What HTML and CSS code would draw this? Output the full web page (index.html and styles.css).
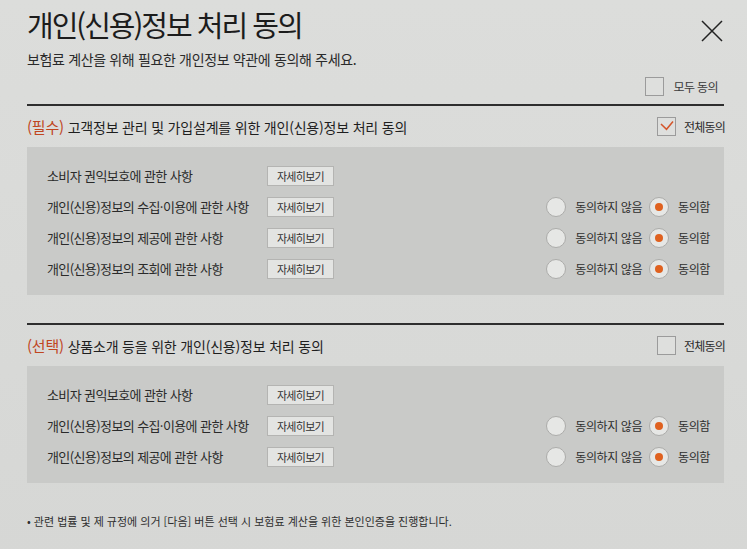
FILE: index.html
```html
<!doctype html>
<html lang="ko">
<head>
	<meta charset="UTF-8" />
	<title>개인(신용)정보 처리 동의</title>
	<link rel="stylesheet" href="styles.css">
</head>
<body>
<div class="popup">
	<div class="popup_head">
		<h1 class="popup_title">개인(신용)정보 처리 동의</h1>
		<button class="btn_close" type="button" aria-label="닫기">
			<svg width="22" height="22" viewBox="0 0 22 22"><path d="M1 1L21 21M21 1L1 21" stroke="#222" stroke-width="1.5" fill="none"/></svg>
		</button>
	</div>
	<p class="popup_lead">보험료 계산을 위해 필요한 개인정보 약관에 동의해 주세요.</p>
	<div class="agree_total">
		<span class="chk"></span><span class="agree_txt">모두 동의</span>
	</div>

	<div class="terms">
		<div class="terms_head">
			<h2 class="terms_title"><em>(필수)</em> 고객정보 관리 및 가입설계를 위한 개인(신용)정보 처리 동의</h2>
			<div class="agree_all">
				<span class="chk on"><svg width="19" height="19" viewBox="0 0 19 19"><path d="M4 7L9.5 12.3L16 4.6" stroke="#d4552a" stroke-width="1.5" fill="none"/></svg></span><span>전체동의</span>
			</div>
		</div>
		<ul class="terms_list">
			<li>
				<span class="terms_name">소비자 권익보호에 관한 사항</span><button class="btn_more" type="button">자세히보기</button>
			</li>
			<li>
				<span class="terms_name">개인(신용)정보의 수집·이용에 관한 사항</span><button class="btn_more" type="button">자세히보기</button>
				<div class="choice"><span class="radio"></span><span class="radio_txt">동의하지 않음</span><span class="radio on"></span><span class="radio_txt">동의함</span></div>
			</li>
			<li>
				<span class="terms_name">개인(신용)정보의 제공에 관한 사항</span><button class="btn_more" type="button">자세히보기</button>
				<div class="choice"><span class="radio"></span><span class="radio_txt">동의하지 않음</span><span class="radio on"></span><span class="radio_txt">동의함</span></div>
			</li>
			<li>
				<span class="terms_name">개인(신용)정보의 조회에 관한 사항</span><button class="btn_more" type="button">자세히보기</button>
				<div class="choice"><span class="radio"></span><span class="radio_txt">동의하지 않음</span><span class="radio on"></span><span class="radio_txt">동의함</span></div>
			</li>
		</ul>
	</div>

	<div class="terms terms_second">
		<div class="terms_head">
			<h2 class="terms_title"><em>(선택)</em> 상품소개 등을 위한 개인(신용)정보 처리 동의</h2>
			<div class="agree_all">
				<span class="chk"></span><span>전체동의</span>
			</div>
		</div>
		<ul class="terms_list">
			<li>
				<span class="terms_name">소비자 권익보호에 관한 사항</span><button class="btn_more" type="button">자세히보기</button>
			</li>
			<li>
				<span class="terms_name">개인(신용)정보의 수집·이용에 관한 사항</span><button class="btn_more" type="button">자세히보기</button>
				<div class="choice"><span class="radio"></span><span class="radio_txt">동의하지 않음</span><span class="radio on"></span><span class="radio_txt">동의함</span></div>
			</li>
			<li>
				<span class="terms_name">개인(신용)정보의 제공에 관한 사항</span><button class="btn_more" type="button">자세히보기</button>
				<div class="choice"><span class="radio"></span><span class="radio_txt">동의하지 않음</span><span class="radio on"></span><span class="radio_txt">동의함</span></div>
			</li>
		</ul>
	</div>

	<p class="popup_note">• 관련 법률 및 제 규정에 의거 [다음] 버튼 선택 시 보험료 계산을 위한 본인인증을 진행합니다.</p>
</div>
</body>
</html>
```

FILE: styles.css
```css
body {margin:0; background:#d9dad8; color:#2a2a2a; font-family:"Noto Sans CJK KR", "Noto Sans", sans-serif;}
.popup {width:697px; height:549px; padding:7px 23px 0 27px; background:linear-gradient(#dcdddb, #d6d7d5);}
.popup_head {display:flex; justify-content:space-between; align-items:flex-start;}
.popup_title {margin:0; font-size:29px; line-height:34px; font-weight:400; letter-spacing:-2px; color:#1c1c1c;}
.btn_close {margin:13px 1px 0 0; padding:0; border:0; background:none; width:22px; height:22px; cursor:pointer;}
.btn_close svg {display:block;}
.popup_lead {margin:7px 0 0; font-size:14px; line-height:20px; letter-spacing:-0.35px;}
.agree_total {display:flex; justify-content:flex-end; align-items:center; gap:9px; margin:8px 6px 0 0; height:19px; font-size:12px; letter-spacing:-0.6px; color:#3a3a3a;}

.chk {display:block; width:17px; height:17px; border:1px solid #9b9b9b; background:#dedfdd;}
.chk svg {display:block; margin:-1px;}

.terms {margin-top:8px; border-top:2px solid #2e2e2e;}
.terms_second {margin-top:28px;}
.terms_head {display:flex; justify-content:space-between; align-items:center; height:41px;}
.terms_title {margin:0; font-size:14px; font-weight:400; letter-spacing:-0.2px; color:#1e1e1e;}
.terms_title em {font-style:normal; color:#c0461f; font-size:15px;}
.agree_all {display:flex; align-items:center; gap:8px; font-size:12px; letter-spacing:-0.8px; color:#2a2a2a; margin-right:-1px;}

.terms_list {list-style:none; margin:0; padding:13px 14px 11px 20px; background:#c9cac8;}
.terms_list li {display:flex; align-items:center; height:31px;}
.terms_name {width:220px; font-size:13px; letter-spacing:-0.6px; color:#2a2a2a;}
.btn_more {width:67px; height:20px; padding:0; border:1px solid #b4b4b2; background:#e3e4e2; font-family:inherit; font-size:11px; letter-spacing:-0.7px; color:#333; cursor:pointer;}

.choice {display:flex; align-items:center; margin-left:auto;}
.radio {position:relative; width:18px; height:18px; border:1px solid #acacaa; border-radius:50%; background:#e6e7e5;}
.radio.on::after {content:""; position:absolute; left:5px; top:5px; width:8px; height:8px; border-radius:50%; background:#df611f;}
.radio_txt {margin:0 7px 0 9px; font-size:12px; letter-spacing:-0.4px; color:#2e2e2e;}
.radio_txt:last-child {margin-right:0;}

.popup_note {margin:29px 0 0; font-size:11px; line-height:18px; letter-spacing:0; color:#2e2e2e;}
```
